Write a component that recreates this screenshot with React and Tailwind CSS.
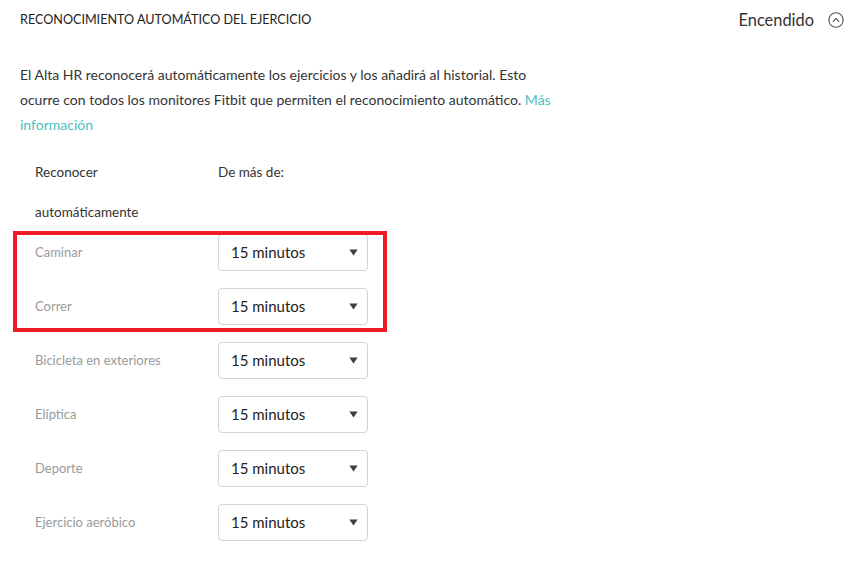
import React from "react";

const activities = [
  "Caminar",
  "Correr",
  "Bicicleta en exteriores",
  "Elíptica",
  "Deporte",
  "Ejercicio aeróbico",
];

const SelectBox = () => (
  <div className="relative flex h-[37px] w-[150px] items-center rounded-[4px] border border-[#d4d4d4] bg-white pl-3 pr-[9px]">
    <span className="text-[15px] text-[#222]">15 minutos</span>
    <svg className="ml-auto" width="9" height="7" viewBox="0 0 9 7">
      <path d="M0.3 0.5 H8.7 L4.5 6.6 Z" fill="#3f3f3f" />
    </svg>
  </div>
);

const App = () => {
  return (
    <div
      className="relative h-[565px] w-[850px] bg-white text-[#333]"
      style={{ fontFamily: "Lato, 'Liberation Sans', sans-serif" }}
    >
      <div className="flex h-[40px] items-center pl-5 pr-[6px]">
        <h2 className="text-[12.6px] font-normal uppercase text-[#222]">
          Reconocimiento automático del ejercicio
        </h2>
        <div className="ml-auto flex items-center gap-[14px]">
          <span className="text-[16.4px] text-[#333]">Encendido</span>
          <svg width="16" height="16" viewBox="0 0 16 16" fill="none" stroke="#555" strokeWidth="1.1">
            <circle cx="8" cy="8" r="7.2" />
            <path d="M5.2 9.3 L8 6.5 L10.8 9.3" strokeLinecap="round" strokeLinejoin="round" />
          </svg>
        </div>
      </div>

      <p className="mt-[22px] w-[560px] pl-5 text-[14px] leading-[25px] text-[#333]">
        El Alta HR reconocerá automáticamente los ejercicios y los añadirá al historial. Esto
        ocurre con todos los monitores Fitbit que permiten el reconocimiento automático.{" "}
        <span className="text-[#4cc0c3]">Más información</span>
      </p>

      <div className="mt-[15px] grid grid-cols-[183px_150px] pl-[35px]">
        <div className="text-[13.5px] leading-[40px] text-[#333]">
          Reconocer
          <br />
          automáticamente
        </div>
        <div className="text-[13.5px] leading-[40px] text-[#333]">De más de:</div>
      </div>

      <div className="flex flex-col gap-[17px] pl-[35px] pt-[2px]">
        {activities.map((name) => (
          <div key={name} className="grid grid-cols-[183px_150px] items-center">
            <span className="text-[13px] text-[#9a9a9a]">{name}</span>
            <SelectBox />
          </div>
        ))}
      </div>

      <div className="pointer-events-none absolute left-[13px] top-[231px] h-[101px] w-[374px] border-[4px] border-[#ed1c24]" />
    </div>
  );
};

export default App;
